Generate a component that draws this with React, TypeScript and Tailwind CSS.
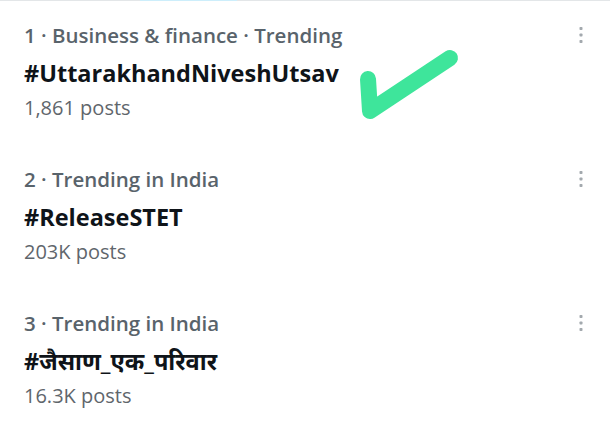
const trends = [
  { rank: 1, category: "Business & finance · Trending", tag: "#UttarakhandNiveshUtsav", posts: "1,861 posts" },
  { rank: 2, category: "Trending in India", tag: "#ReleaseSTET", posts: "203K posts" },
  { rank: 3, category: "Trending in India", tag: "#जैसाण_एक_परिवार", posts: "16.3K posts" },
];

const MoreIcon = () => (
  <svg className="w-[6px] h-[20px] text-[#a3a9ae]" viewBox="0 0 6 20" fill="currentColor">
    <rect x="1.5" y="2" width="3" height="3" rx="0.8" />
    <rect x="1.5" y="8.5" width="3" height="3" rx="0.8" />
    <rect x="1.5" y="15" width="3" height="3" rx="0.8" />
  </svg>
);

export default function App() {
  return (
    <div className="relative w-[610px] h-[445px] bg-white overflow-hidden" style={{ fontFamily: "'Open Sans', 'Noto Sans', 'Noto Sans Devanagari', sans-serif" }}>
      {/* tab strip remnant */}
      <div className="h-px bg-[#e3e6e8] flex">
        <div className="ml-[140px] w-[97px] h-px bg-[#cdeefb]" />
      </div>

      {trends.map((t, i) => (
        <div key={t.rank} className={`flex justify-between pl-6 pr-[26px] pb-6 ${i === 0 ? "pt-[22px]" : "pt-[23px]"}`}>
          <div className="flex flex-col">
            <div className="text-[20.5px] leading-[24px] font-semibold text-[#59636b]">
              {t.rank} · {t.category}
            </div>
            <div className="mt-3 text-[23.5px] leading-[28px] font-bold text-[#0f1419]">{t.tag}</div>
            <div className="mt-[9px] text-[20px] leading-[24px] text-[#5f666c]">{t.posts}</div>
          </div>
          <div className="pt-[2px]">
            <MoreIcon />
          </div>
        </div>
      ))}

      {/* hand-drawn check mark */}
      <svg className="absolute left-[355px] top-[45px] w-[110px] h-[80px]" viewBox="0 0 110 80">
        <path d="M13 34 L15 66 L95 13" fill="none" stroke="#3ee59b" strokeWidth="16" strokeLinecap="round" strokeLinejoin="round" />
      </svg>
    </div>
  );
}
